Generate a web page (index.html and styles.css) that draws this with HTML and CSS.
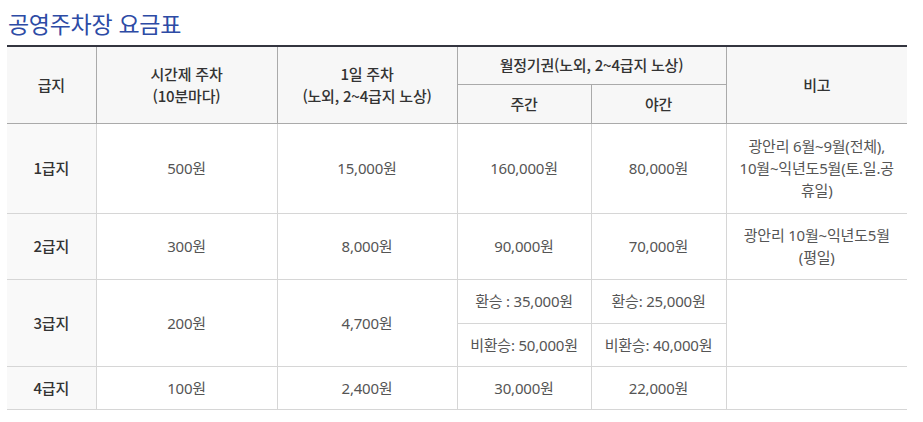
FILE: index.html
```html
<!DOCTYPE html>
<html lang="ko">
<head>
<meta charset="utf-8">
<link rel="stylesheet" href="styles.css">
</head>
<body>
<h2 class="title">공영주차장 요금표</h2>
<table class="fee">
  <colgroup>
    <col class="c1"><col class="c2"><col class="c3"><col class="c4"><col class="c5"><col class="c6">
  </colgroup>
  <thead>
    <tr class="h1">
      <th rowspan="2">급지</th>
      <th rowspan="2">시간제 주차<br>(10분마다)</th>
      <th rowspan="2">1일 주차<br>(노외, 2~4급지 노상)</th>
      <th colspan="2">월정기권(노외, 2~4급지 노상)</th>
      <th rowspan="2">비고</th>
    </tr>
    <tr class="h2">
      <th>주간</th>
      <th>야간</th>
    </tr>
  </thead>
  <tbody>
    <tr class="r1">
      <th>1급지</th>
      <td>500원</td>
      <td>15,000원</td>
      <td>160,000원</td>
      <td>80,000원</td>
      <td>광안리 6월~9월(전체),<br>10월~익년도5월(토.일.공<br>휴일)</td>
    </tr>
    <tr class="r2">
      <th>2급지</th>
      <td>300원</td>
      <td>8,000원</td>
      <td>90,000원</td>
      <td>70,000원</td>
      <td class="top">광안리 10월~익년도5월<br>(평일)</td>
    </tr>
    <tr class="r3">
      <th rowspan="2">3급지</th>
      <td rowspan="2">200원</td>
      <td rowspan="2">4,700원</td>
      <td>환승 : 35,000원</td>
      <td>환승: 25,000원</td>
      <td rowspan="2"></td>
    </tr>
    <tr class="r3b">
      <td>비환승: 50,000원</td>
      <td>비환승: 40,000원</td>
    </tr>
    <tr class="r4">
      <th>4급지</th>
      <td>100원</td>
      <td>2,400원</td>
      <td>30,000원</td>
      <td>22,000원</td>
      <td></td>
    </tr>
  </tbody>
</table>
</body>
</html>
```
FILE: styles.css
```css
html, body {
  margin: 0;
  padding: 0;
  background: #fff;
}
body {
  padding: 0 16px 0 7px;
  font-family: "Noto Sans", "Noto Sans CJK KR", sans-serif;
  color: #555;
}
.title {
  margin: 0;
  padding: 7px 0 0 1px;
  height: 45px;
  box-sizing: border-box;
  font-family: "Noto Sans CJK KR", sans-serif;
  font-size: 23px;
  font-weight: 400;
  line-height: 32px;
  color: #2d4ba5;
  letter-spacing: -0.3px;
}
.fee {
  width: 900px;
  border-collapse: collapse;
  border-top: 2px solid #33353f;
  font-size: 15px;
  line-height: 22px;
  table-layout: fixed;
}
.c1 { width: 89px; }
.c2 { width: 181px; }
.c3 { width: 180px; }
.c4 { width: 134px; }
.c5 { width: 135px; }
.c6 { width: 181px; }
.fee th, .fee td {
  text-align: center;
  vertical-align: middle;
  padding: 0 4px;
  border: 1px solid #d6d6d6;
  letter-spacing: -0.2px;
}
.fee tr > :first-child { border-left: 0; }
.fee tr > :last-child { border-right: 0; }
.fee tr.r3b > :last-child { border-right: 1px solid #d6d6d6; }
.fee thead th {
  background: #f7f7f7;
  color: #333;
  font-weight: 500;
  border-color: #aaaaaa;
  font-family: "Noto Sans CJK KR", sans-serif;
}
.fee thead tr.h1 th { border-top: 0; }
.fee tbody th {
  background: #f9f9f9;
  color: #333;
  font-weight: 500;
  font-family: "Noto Sans CJK KR", sans-serif;
}
.fee tbody td.top { vertical-align: top; padding-top: 10px; }
.h1 { height: 38px; }
.h2 { height: 39px; }
.r1 { height: 90px; }
.r2 { height: 66px; }
.r3 { height: 44px; }
.r3b { height: 43px; }
.r4 { height: 43px; }
```
